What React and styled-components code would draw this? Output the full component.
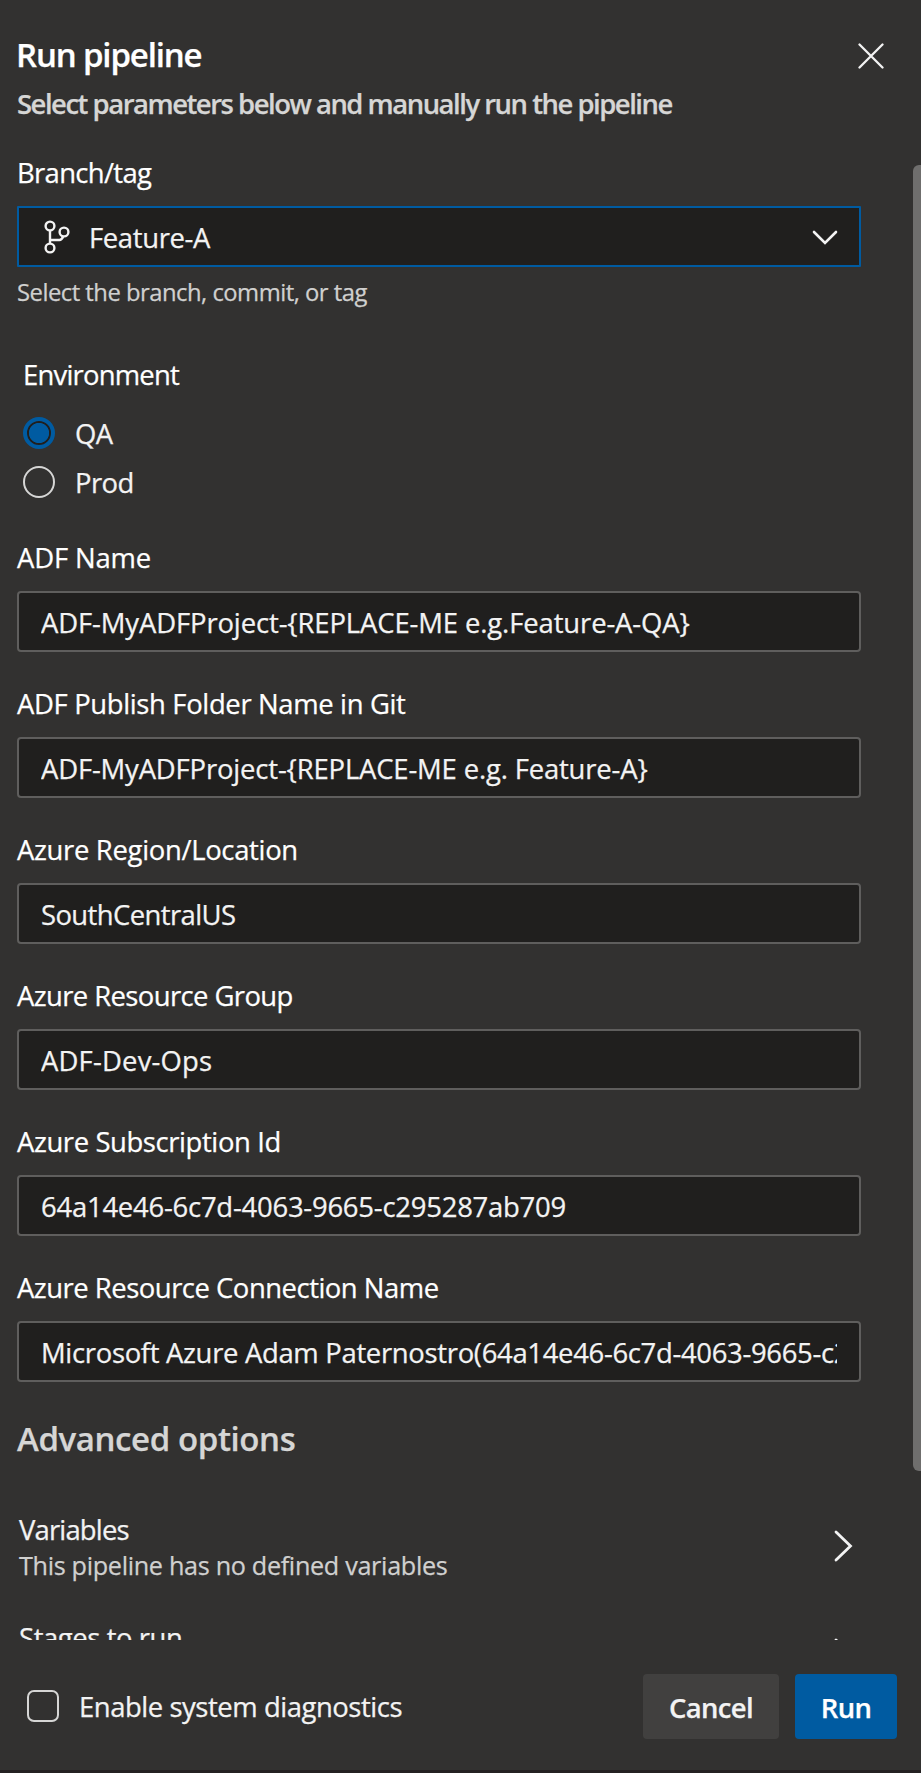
import React from "react";
import styled, { createGlobalStyle } from "styled-components";

const GlobalStyle = createGlobalStyle`
  *, *::before, *::after { box-sizing: border-box; }
  body { margin: 0; background: #323130; }
`;

const Panel = styled.div`
  display: flex;
  flex-direction: column;
  width: 921px;
  height: 1773px;
  overflow: hidden;
  background: #323130;
  color: #f3f3f3;
  font-family: "Open Sans", "Noto Sans", sans-serif;
  font-size: 27.45px;
  -webkit-text-stroke: 0.25px currentColor;
`;

const Header = styled.header`
  display: flex;
  justify-content: space-between;
  flex: none;
  height: 150px;
  padding: 32px 37px 0 17px;
`;

const Title = styled.h1`
  margin: 0 0 6px -1px;
  font-size: 33px;
  line-height: 46px;
  font-weight: 600;
  letter-spacing: -1.15px;
  color: #fff;
`;

const Subtitle = styled.p`
  margin: 0;
  line-height: 40px;
  font-weight: 600;
  letter-spacing: -1.48px;
  color: #d6d6d5;
`;

const IconButton = styled.button`
  display: flex;
  align-self: flex-start;
  margin-top: 11px;
  padding: 0;
  border: 0;
  background: none;
  color: #f3f3f3;
`;

const Body = styled.main`
  display: flex;
  flex: 1;
  min-height: 0;
  overflow: hidden;
`;

const Content = styled.div`
  width: 844px;
  margin-left: 17px;
  padding-top: 4px;
`;

const Scrollbar = styled.div`
  width: 8px;
  margin-left: auto;
  padding-top: 15px;
`;

const Thumb = styled.div`
  height: 1306px;
  border-radius: 6px 0 0 6px;
  background: #6f6e6d;
`;

const Field = styled.div`
  margin-bottom: 33px;
`;

const Label = styled.label`
  display: block;
  padding-top: 1px;
  line-height: 36px;
  margin-bottom: 15px;
  color: #fff;
  letter-spacing: ${(p) => p.$tracking}px;
`;

const Input = styled.input`
  display: block;
  width: 100%;
  height: 61px;
  padding: 2px 22px 0;
  border: 2px solid #5f5e5d;
  border-radius: 4px;
  outline: 0;
  background: #201f1e;
  color: #f3f3f3;
  font: inherit;
  letter-spacing: ${(p) => p.$tracking}px;
`;

const Select = styled.div`
  display: flex;
  align-items: center;
  height: 61px;
  padding: 0 21px 0 24px;
  border: 2px solid #005ba1;
  border-radius: 1px;
  background: #201f1e;
`;

const SelectValue = styled.span`
  flex: 1;
  margin-left: 19px;
  padding-top: 2px;
  letter-spacing: -0.35px;
`;

const Hint = styled.p`
  margin: ${(p) => p.$gap}px 0 0;
  font-size: ${(p) => p.$size}px;
  line-height: 32px;
  letter-spacing: ${(p) => p.$tracking}px;
  color: #d0d0cf;
`;

const RadioGroup = styled.div`
  display: flex;
  flex-direction: column;
  gap: 17px;
  margin: 48px 0 41px 6px;
`;

const GroupName = styled.div`
  margin-bottom: 7px;
  padding-top: 1px;
  line-height: 36px;
  letter-spacing: -0.79px;
  color: #fff;
`;

const Option = styled.label`
  display: flex;
  align-items: center;
  gap: 20px;
  height: 32px;
  line-height: 32px;
  letter-spacing: -0.6px;
`;

const OptionText = styled.span`
  padding-top: 2px;
`;

const Radio = styled.span`
  width: 32px;
  height: 32px;
  border-radius: 50%;
  border: ${(p) => (p.$checked ? "4px solid #005ba1" : "2px solid #d6d6d5")};
  background: ${(p) => (p.$checked ? "radial-gradient(circle, #005ba1 9.7px, #201f1e 10.5px)" : "none")};
`;

const SectionTitle = styled.h2`
  margin: 35px 0 50px;
  font-size: 33px;
  line-height: 44px;
  font-weight: 600;
  letter-spacing: -0.4px;
  color: #d6d6d5;
`;

const LinkRow = styled.div`
  display: flex;
  align-items: center;
  justify-content: space-between;
  min-height: 70px;
  margin-bottom: 38px;
  padding: 0 7px 0 2px;
`;

const LinkName = styled.div`
  padding-top: 1px;
  line-height: 36px;
  letter-spacing: ${(p) => p.$tracking}px;
`;

const Footer = styled.footer`
  display: flex;
  flex: none;
  align-items: flex-start;
  height: 133px;
  padding: 34px 24px 0 27px;
  border-bottom: 3px solid #242122;
`;

const CheckOption = styled.label`
  display: flex;
  align-items: center;
  gap: 20px;
  flex: 1;
  height: 64px;
  letter-spacing: -0.45px;
`;

const Checkbox = styled.span`
  width: 32px;
  height: 32px;
  border: 2px solid #d6d6d5;
  border-radius: 7px;
`;

const Button = styled.button`
  width: ${(p) => p.$width}px;
  height: 65px;
  margin-left: 16px;
  padding: 1px 0 0;
  border: 0;
  border-radius: 4px;
  background: ${(p) => (p.$primary ? "#005ba1" : "#41403f")};
  color: ${(p) => (p.$primary ? "#fff" : "#f3f3f3")};
  font: inherit;
  font-weight: 600;
  letter-spacing: -0.65px;
`;

const Stroke = ({ w, h, d, width = 2.2 }) => (
  <svg width={w} height={h} viewBox={`0 0 ${w} ${h}`} fill="none" stroke="currentColor" strokeWidth={width} strokeLinecap="round">
    <path d={d} />
  </svg>
);

const BranchIcon = () => (
  <svg width="27" height="34" viewBox="0 0 27 34" fill="none" stroke="currentColor" strokeWidth="2.4">
    <circle cx="7" cy="6" r="4.4" />
    <circle cx="7" cy="28" r="4.4" />
    <circle cx="21" cy="12" r="4.4" />
    <path d="M7 10.500V23.500M7 20H16.500C18.300 20 19.200 19 20.300 16.300" />
  </svg>
);

const Chevron = () => <Stroke w={20} h={34} width={2.8} d="M2 3L16.500 17L2 31" />;

const fields = [
  ["ADF Name", -0.16, "ADF-MyADFProject-{REPLACE-ME e.g.Feature-A-QA}", -0.12],
  ["ADF Publish Folder Name in Git", -0.35, "ADF-MyADFProject-{REPLACE-ME e.g. Feature-A}", -0.165],
  ["Azure Region/Location", -0.32, "SouthCentralUS", -0.59],
  ["Azure Resource Group", -0.6, "ADF-Dev-Ops", 0.18],
  ["Azure Subscription Id", -0.4, "64a14e46-6c7d-4063-9665-c295287ab709", -0.23],
  ["Azure Resource Connection Name", -0.49, "Microsoft Azure Adam Paternostro(64a14e46-6c7d-4063-9665-c295287ab709)", -0.315],
];

export default function App() {
  return (
    <Panel>
      <GlobalStyle />
      <Header>
        <div>
          <Title>Run pipeline</Title>
          <Subtitle>Select parameters below and manually run the pipeline</Subtitle>
        </div>
        <IconButton aria-label="Close">
          <Stroke w={26} h={26} width={2.3} d="M1.500 1.500L24.500 24.500M24.500 1.500L1.500 24.500" />
        </IconButton>
      </Header>
      <Body>
        <Content>
          <Label $tracking={-0.67}>Branch/tag</Label>
          <Select>
            <BranchIcon />
            <SelectValue>Feature-A</SelectValue>
            <Stroke w={26} h={18} width={2.6} d="M2 4L13 15L24 4" />
          </Select>
          <Hint $gap={9} $size={23.8} $tracking={-0.5}>Select the branch, commit, or tag</Hint>
          <RadioGroup>
            <GroupName>Environment</GroupName>
            <Option><Radio $checked /><OptionText>QA</OptionText></Option>
            <Option><Radio /><OptionText>Prod</OptionText></Option>
          </RadioGroup>
          {fields.map(([label, labelTracking, value, valueTracking]) => (
            <Field key={label}>
              <Label $tracking={labelTracking}>{label}</Label>
              <Input readOnly value={value} $tracking={valueTracking} />
            </Field>
          ))}
          <SectionTitle>Advanced options</SectionTitle>
          <LinkRow>
            <div>
              <LinkName $tracking={-0.83}>Variables</LinkName>
              <Hint $gap={1} $size={25.2} $tracking={-0.32}>This pipeline has no defined variables</Hint>
            </div>
            <Chevron />
          </LinkRow>
          <LinkRow>
            <div>
              <LinkName $tracking={-0.42}>Stages to run</LinkName>
              <Hint $gap={1} $size={25.2} $tracking={-0.32}>&nbsp;</Hint>
            </div>
            <Chevron />
          </LinkRow>
        </Content>
        <Scrollbar><Thumb /></Scrollbar>
      </Body>
      <Footer>
        <CheckOption><Checkbox />Enable system diagnostics</CheckOption>
        <Button $width={136}>Cancel</Button>
        <Button $width={102} $primary>Run</Button>
      </Footer>
    </Panel>
  );
}
